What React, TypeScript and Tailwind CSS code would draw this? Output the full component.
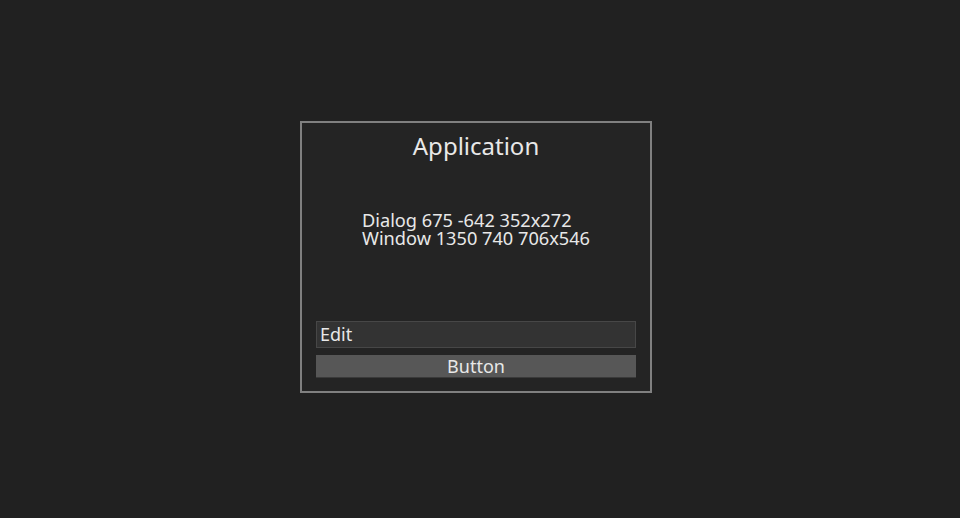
export default function App() {
  return (
    <div
      className="h-[518px] w-[960px] bg-[#212121] pl-[300px] pt-[121px]"
      style={{ fontFamily: '"Noto Sans", "Open Sans", sans-serif' }}
    >
      <div className="flex h-[272px] w-[352px] flex-col border-2 border-[#808080] bg-[#242424] px-[14px] pb-[13px] text-[#e8e8e8]">
        <div className="mt-[6px] text-center text-[24px] leading-[34px]">Application</div>
        <div className="mt-[48px] pl-[46px] text-[18.2px] leading-[18px]">
          <div>Dialog 675 -642 352x272</div>
          <div>Window 1350 740 706x546</div>
        </div>
        <div className="flex-1" />
        <div className="flex h-[27px] items-center border border-[#474747] bg-[#333333] px-[3px] text-[18px]">
          Edit
        </div>
        <button className="mt-[7px] h-[23px] border-b border-[#3a3a3a] bg-[#575757] text-[18px] leading-[23px] text-[#e8e8e8]">
          Button
        </button>
      </div>
    </div>
  );
}
